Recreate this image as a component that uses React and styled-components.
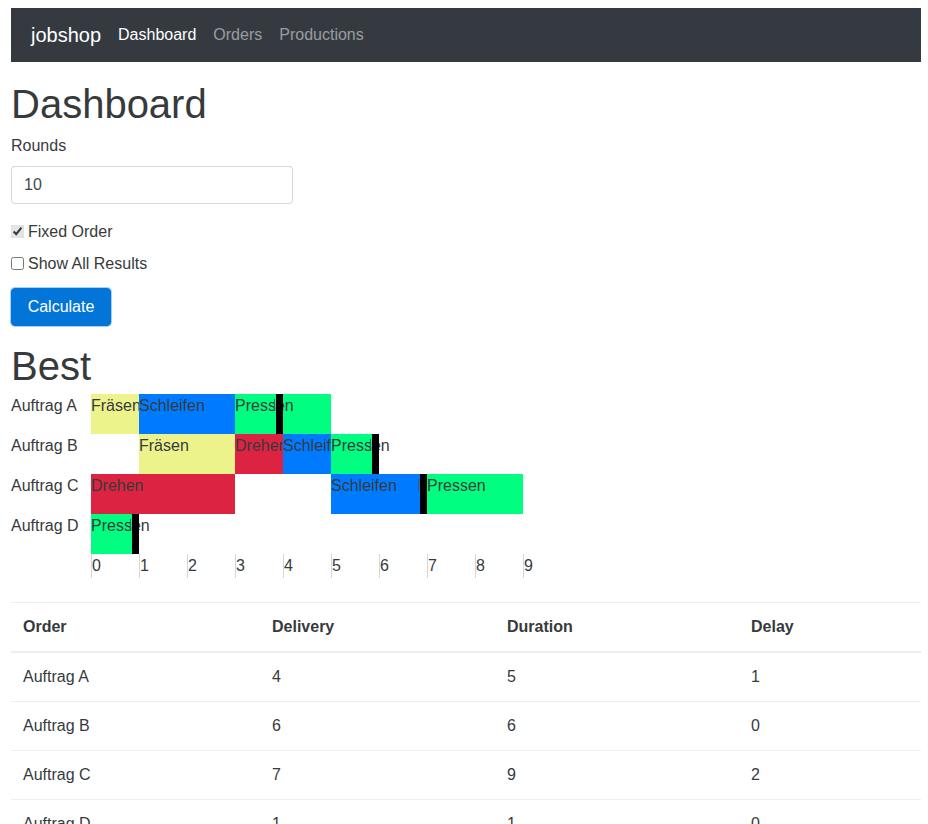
import React, { useState } from 'react';
import styled, { createGlobalStyle } from 'styled-components';

const GlobalStyle = createGlobalStyle`
    body {
        margin: 0;
        font-family: "Liberation Sans", Arial, sans-serif;
        font-size: 16px;
        line-height: 1.5;
        color: #373a3c;
        background: #fff;
    }
`;

const UNIT = 48;

const colors = {
    Fräsen: '#ebf38a',
    Schleifen: '#007bff',
    Pressen: '#00ff80',
    Drehen: '#dc2442',
};

const orders = [
    {
        name: 'Auftrag A',
        delivery: 4,
        duration: 5,
        delay: 1,
        steps: [
            { machine: 'Fräsen', start: 0, length: 1 },
            { machine: 'Schleifen', start: 1, length: 2 },
            { machine: 'Pressen', start: 3, length: 2 },
        ],
    },
    {
        name: 'Auftrag B',
        delivery: 6,
        duration: 6,
        delay: 0,
        steps: [
            { machine: 'Fräsen', start: 1, length: 2 },
            { machine: 'Drehen', start: 3, length: 1 },
            { machine: 'Schleifen', start: 4, length: 1 },
            { machine: 'Pressen', start: 5, length: 1 },
        ],
    },
    {
        name: 'Auftrag C',
        delivery: 7,
        duration: 9,
        delay: 2,
        steps: [
            { machine: 'Drehen', start: 0, length: 3 },
            { machine: 'Schleifen', start: 5, length: 2 },
            { machine: 'Pressen', start: 7, length: 2 },
        ],
    },
    {
        name: 'Auftrag D',
        delivery: 1,
        duration: 1,
        delay: 0,
        steps: [{ machine: 'Pressen', start: 0, length: 1 }],
    },
];

const Page = styled.div`
    padding: 8px 7px 0 11px;
`;

const Navbar = styled.nav`
    display: flex;
    align-items: center;
    gap: 17px;
    height: 54px;
    padding: 0 20px;
    background: #343a40;
`;

const Brand = styled.a`
    font-size: 20px;
    color: #fff;
    text-decoration: none;
`;

const NavLink = styled.a`
    font-size: 16px;
    text-decoration: none;
    color: ${(props) => (props.$active ? '#fff' : 'rgba(255, 255, 255, 0.5)')};
`;

const Title = styled.h1`
    margin: ${(props) => props.$top}px 0 ${(props) => props.$bottom}px;
    font-size: 40px;
    font-weight: 400;
    line-height: 1.1;
`;

const Label = styled.label`
    display: block;
    margin-bottom: 8px;
`;

const Input = styled.input`
    display: block;
    box-sizing: border-box;
    width: 282px;
    height: 38px;
    margin-bottom: 16px;
    padding: 8px 12px;
    border: 1px solid rgba(0, 0, 0, 0.15);
    border-radius: 4px;
    font: inherit;
    line-height: 1.25;
    color: #464a4c;
    outline: none;
`;

const Check = styled.label`
    display: flex;
    align-items: center;
    gap: 4px;
    height: 24px;
    margin-bottom: 8px;

    input {
        width: 13px;
        height: 13px;
        margin: 0 0 2px;
        accent-color: #e4e4e4;
    }
`;

const Button = styled.button`
    margin-top: 4px;
    width: 100px;
    height: 38px;
    padding: 0;
    border: 1px solid #0275d8;
    border-radius: 4px;
    background: #0275d8;
    box-shadow: 0 0 0 1px rgba(2, 117, 216, 0.35);
    color: #fff;
    font: inherit;
    cursor: pointer;
`;

const Chart = styled.div`
    display: grid;
    grid-template-columns: 80px repeat(10, ${UNIT}px);
    grid-template-rows: repeat(4, 40px) 24px;
`;

const RowLabel = styled.div`
    grid-column: 1;
    grid-row: ${(props) => props.$row};
`;

const Bar = styled.div`
    grid-row: ${(props) => props.$row};
    grid-column: ${(props) => props.$start + 2} / span ${(props) => props.$length};
    background: ${(props) => props.$color};
    white-space: nowrap;
    min-width: 0;
`;

const Marker = styled.div`
    position: relative;
    grid-row: ${(props) => props.$row};
    grid-column: ${(props) => props.$at + 1};
    justify-self: end;
    width: 7px;
    background: #000;

    &::before {
        content: '';
        position: absolute;
        left: -2.5px;
        top: 5px;
        width: 1.5px;
        height: 12px;
        background: #555;
    }
`;

const Tick = styled.div`
    grid-row: 5;
    grid-column: ${(props) => props.$at + 2};
    border-left: 1px solid #d6d6d6;
    line-height: 24px;
`;

const Table = styled.table`
    width: 910px;
    margin-top: 24px;
    border-collapse: collapse;
    border-spacing: 0;
    table-layout: fixed;
`;

const Th = styled.th`
    box-sizing: border-box;
    width: ${(props) => props.$width}px;
    padding: 12px;
    border-top: 1px solid #eceeef;
    border-bottom: 2px solid #eceeef;
    text-align: left;
    font-weight: 700;
    vertical-align: bottom;
`;

const Td = styled.td`
    padding: 12px;
    border-top: 1px solid #eceeef;
    vertical-align: top;
`;

export default function App() {
    const [rounds, setRounds] = useState('10');
    const [fixed, setFixed] = useState(true);
    const [showAll, setShowAll] = useState(false);

    return (
        <Page>
            <GlobalStyle />
            <Navbar>
                <Brand href="#">jobshop</Brand>
                <NavLink href="#" $active>
                    Dashboard
                </NavLink>
                <NavLink href="#">Orders</NavLink>
                <NavLink href="#">Productions</NavLink>
            </Navbar>

            <Title $top={20} $bottom={8}>
                Dashboard
            </Title>
            <Label htmlFor="rounds">Rounds</Label>
            <Input id="rounds" value={rounds} onChange={(e) => setRounds(e.target.value)} />
            <Check>
                <input type="checkbox" checked={fixed} onChange={(e) => setFixed(e.target.checked)} />
                Fixed Order
            </Check>
            <Check>
                <input type="checkbox" checked={showAll} onChange={(e) => setShowAll(e.target.checked)} />
                Show All Results
            </Check>
            <Button>Calculate</Button>

            <Title $top={18} $bottom={6}>
                Best
            </Title>
            <Chart>
                {orders.map((order, i) => (
                    <React.Fragment key={order.name}>
                        <RowLabel $row={i + 1}>{order.name}</RowLabel>
                        {order.steps.map((step) => (
                            <Bar
                                key={step.machine}
                                $row={i + 1}
                                $start={step.start}
                                $length={step.length}
                                $color={colors[step.machine]}
                            >
                                {step.machine}
                            </Bar>
                        ))}
                        <Marker $row={i + 1} $at={order.delivery} />
                    </React.Fragment>
                ))}
                {Array.from({ length: 10 }, (_, n) => (
                    <Tick key={n} $at={n}>
                        {n}
                    </Tick>
                ))}
            </Chart>

            <Table>
                <thead>
                    <tr>
                        <Th $width={249}>Order</Th>
                        <Th $width={235}>Delivery</Th>
                        <Th $width={244}>Duration</Th>
                        <Th $width={182}>Delay</Th>
                    </tr>
                </thead>
                <tbody>
                    {orders.map((order) => (
                        <tr key={order.name}>
                            <Td>{order.name}</Td>
                            <Td>{order.delivery}</Td>
                            <Td>{order.duration}</Td>
                            <Td>{order.delay}</Td>
                        </tr>
                    ))}
                </tbody>
            </Table>
        </Page>
    );
}
